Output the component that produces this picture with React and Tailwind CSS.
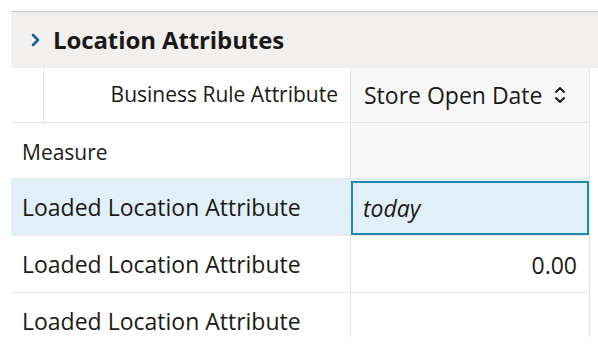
import React from 'react';

const SortIcon = () => (
    <svg width="12" height="20" viewBox="0 0 12 20" fill="none" stroke="#1f1d1b" strokeWidth="2" strokeLinecap="round" strokeLinejoin="round">
        <path d="M2 7 L6 3 L10 7" />
        <path d="M2 13 L6 17 L10 13" />
    </svg>
);

const Chevron = () => (
    <svg width="10" height="14" viewBox="0 0 10 14" fill="none" stroke="#1c6390" strokeWidth="2.6" strokeLinecap="round" strokeLinejoin="round">
        <path d="M3 2 L8 7 L3 12" />
    </svg>
);

const rows = [
    { label: 'Loaded Location Attribute', value: 'today', selected: true },
    { label: 'Loaded Location Attribute', value: '0.00' },
    { label: 'Loaded Location Attribute', value: '' },
];

const App = () => {
    return (
        <div className="w-[598px] h-[353px] bg-white pt-[11px] pl-[11px] text-[#1b1917] font-['Open_Sans',sans-serif] overflow-hidden">
            {/* Section header */}
            <div className="h-[57px] border-t border-[#cbc7c3] bg-[#f1f0ef] flex items-center pl-[19px] gap-[13px]">
                <Chevron />
                <h2 className="text-[24px] font-bold tracking-[-0.1px]">Location Attributes</h2>
            </div>

            {/* Grid */}
            <div className="w-[579px] h-[269px] overflow-hidden">
                {/* Column header row */}
                <div className="flex h-[55px] border-b border-[#e6e6e6]">
                    <div className="w-[33px] border-r border-[#e6e6e6]" />
                    <div className="w-[306px] flex items-center justify-end pr-[12px] text-[21px]">
                        Business Rule Attribute
                    </div>
                    <div className="w-[240px] bg-[#f7f7f7] border-x border-[#e6e6e6] flex items-center pl-[13px] pr-[23px] text-[23px]">
                        <span className="flex-1">Store Open Date</span>
                        <SortIcon />
                    </div>
                </div>

                {/* Measure row */}
                <div className="flex h-[56px] border-b border-[#e6e6e6]">
                    <div className="w-[339px] flex items-center pl-[11px] pt-[4px] text-[21px]">Measure</div>
                    <div className="w-[240px] bg-[#f7f7f7] border-x border-[#e6e6e6]" />
                </div>

                {rows.map((row, i) => (
                    <div
                        key={i}
                        className={`flex h-[57px] border-b border-[#e6e6e6] ${row.selected ? 'bg-[#e1f0f8]' : 'bg-white'}`}
                    >
                        <div className="w-[339px] flex items-center pl-[11px] text-[23px]">{row.label}</div>
                        <div className="w-[240px] border-l border-[#e6e6e6] border-r border-r-[#e6e6e6] pt-[2px]">
                            {row.selected ? (
                                <div className="h-full border-2 border-[#1f8aac] flex items-center pl-[10px] text-[23px] italic">
                                    {row.value}
                                </div>
                            ) : (
                                <div className="h-full flex items-center justify-end pr-[12px] text-[23px]">
                                    {row.value}
                                </div>
                            )}
                        </div>
                    </div>
                ))}
            </div>
        </div>
    );
};

export default App;
